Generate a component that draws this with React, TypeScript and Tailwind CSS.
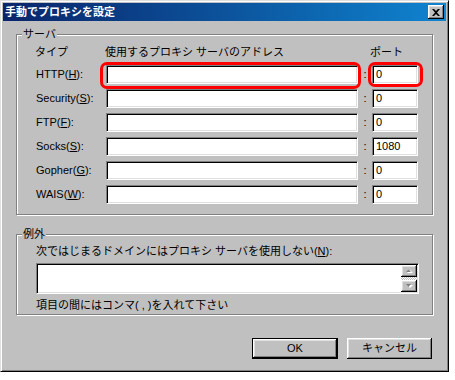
import React from 'react'

const raised =
  'bg-[#c0c0c0] shadow-[inset_-1px_-1px_0_#000,inset_1px_1px_0_#fff,inset_-2px_-2px_0_#808080,inset_2px_2px_0_#dfdfdf]'

function Field({ value = '', className = '' }: { value?: string; className?: string }) {
  return (
    <div
      className={`h-[19px] bg-white border border-t-[#808080] border-l-[#808080] border-r-white border-b-white shadow-[inset_1px_1px_0_#000,inset_-1px_-1px_0_#dfdfdf] pl-[3px] text-[11px] leading-[17px] ${className}`}
    >
      {value}
    </div>
  )
}

function Group({ label, className = '', children }: { label: string; className?: string; children: React.ReactNode }) {
  return (
    <div className={`relative border border-[#808080] shadow-[inset_1px_1px_0_#fff,1px_1px_0_#fff] ${className}`}>
      <span className="absolute top-[-8px] left-[5px] px-[1px] bg-[#c0c0c0] leading-[14px]">{label}</span>
      {children}
    </div>
  )
}

function Arrow({ up }: { up?: boolean }) {
  return (
    <svg width="7" height="5" viewBox="0 0 7 5" className="block">
      {up ? (
        <>
          <path d="M1 4h6L4 1z" fill="#fff" />
          <path d="M0 3h5L2.5 0.5z" fill="#808080" />
        </>
      ) : (
        <>
          <path d="M1 1h6L4 4z" fill="#fff" />
          <path d="M0 0h5L2.5 3z" fill="#808080" />
        </>
      )}
    </svg>
  )
}

const rows = [
  { name: 'HTTP', key: 'H', port: '0', mark: true },
  { name: 'Security', key: 'S', port: '0' },
  { name: 'FTP', key: 'F', port: '0' },
  { name: 'Socks', key: 'S', port: '1080' },
  { name: 'Gopher', key: 'G', port: '0' },
  { name: 'WAIS', key: 'W', port: '0' },
]

export default function App() {
  return (
    <div className="w-[455px] h-[380px] bg-white font-['Liberation_Sans','Noto_Sans_CJK_JP',sans-serif] text-[11px] text-black">
      <div className="w-[449px] h-[372px] bg-[#c0c0c0] border border-[#dfdfdf] border-r-black border-b-black shadow-[inset_1px_1px_0_#fff,inset_-1px_-1px_0_#808080] p-[2px]">
        {/* title bar */}
        <div className="h-[18px] flex items-center justify-between pl-[2px] pr-[2px] bg-gradient-to-r from-[#0a246a] to-[#1084d0]">
          <span className="text-white font-bold text-[11px] leading-[18px]">手動でプロキシを設定</span>
          <div className={`w-[16px] h-[14px] flex items-center justify-center ${raised}`}>
            <svg width="8" height="7" viewBox="0 0 8 7">
              <path d="M0 0h2l2 2 2-2h2L5 3.5 8 7H6L4 5 2 7H0l3-3.5z" fill="#000" />
            </svg>
          </div>
        </div>

        <div className="pl-[13px] pr-[13px]">
          <Group label="サーバ" className="mt-[13px] h-[181px] pl-[19px] pt-[10px]">
            <div className="grid grid-cols-[70px_252px_14px_46px] gap-y-[5px] items-center">
              <div className="h-[14px] leading-[14px] -ml-[1px] mb-[1px]">タイプ</div>
              <div className="h-[14px] leading-[14px] -ml-[1px] mb-[1px]">使用するプロキシ サーバのアドレス</div>
              <div />
              <div className="h-[14px] leading-[14px] -ml-[2px] mb-[1px]">ポート</div>
              {rows.map((r) => (
                <React.Fragment key={r.name}>
                  <div className="leading-[19px]">
                    {r.name}(<u>{r.key}</u>):
                  </div>
                  <div className="relative">
                    <Field />
                    {r.mark && (
                      <span className="absolute top-[-3px] left-[-6px] right-[-3px] bottom-[-5px] rounded-[7px] border-[3px] border-[#ff0000]" />
                    )}
                  </div>
                  <div className="text-center leading-[19px]">:</div>
                  <div className="relative">
                    <Field value={r.port} />
                    {r.mark && (
                      <span className="absolute top-[-3px] left-[-4px] right-[-5px] bottom-[-3px] rounded-[7px] border-[3px] border-[#ff0000]" />
                    )}
                  </div>
                </React.Fragment>
              ))}
            </div>
          </Group>

          <Group label="例外" className="mt-[19px] h-[81px] pl-[19px] pt-[9px]">
            <div className="leading-[14px]">
              次ではじまるドメインにはプロキシ サーバを使用しない(<u>N</u>):
            </div>
            <div className="mt-[5px] w-[383px] h-[31px] flex justify-end bg-white border border-t-[#808080] border-l-[#808080] border-r-white border-b-white shadow-[inset_1px_1px_0_#000,inset_-1px_-1px_0_#dfdfdf] pt-[1px] pb-[1px] pr-[1px]">
              <div className="w-[16px] flex flex-col">
                <div className={`h-[12px] flex items-center justify-center ${raised}`}>
                  <Arrow up />
                </div>
                <div className="flex-1 bg-[repeating-conic-gradient(#c0c0c0_0_25%,#fff_0_50%)] bg-[length:2px_2px]" />
                <div className={`h-[12px] flex items-center justify-center ${raised}`}>
                  <Arrow />
                </div>
              </div>
            </div>
            <div className="mt-[4px] leading-[14px]">項目の間にはコンマ( , )を入れて下さい</div>
          </Group>

          <div className="mt-[23px] flex justify-end gap-[9px] pr-[1px]">
            <div className="w-[86px] h-[21px] border border-black">
              <div className={`h-full flex items-center justify-center ${raised}`}>OK</div>
            </div>
            <div className={`w-[85px] h-[21px] flex items-center justify-center ${raised}`}>キャンセル</div>
          </div>
        </div>
      </div>
    </div>
  )
}
